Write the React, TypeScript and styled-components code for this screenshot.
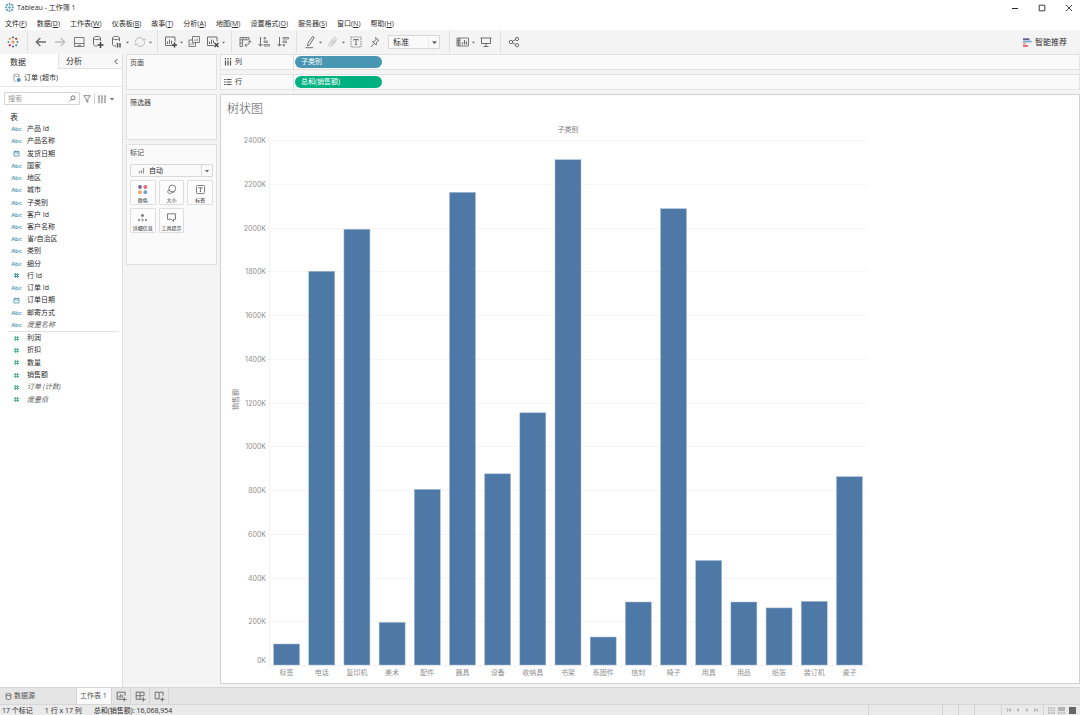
import React from "react";
import styled, { createGlobalStyle, css } from "styled-components";

const GlobalStyle = createGlobalStyle`
  * { box-sizing: border-box; }
  body {
    margin: 0;
    background: #f4f4f4;
    color: #2b2b2b;
    font-family: "Open Sans", "Noto Sans CJK SC", sans-serif;
    font-size: 7px;
    line-height: 12px;
  }
  button, input, select { font: inherit; color: inherit; }
  ul, h1, h2, p { margin: 0; padding: 0; }
  ul { list-style: none; }
`;

const buttonReset = css`
  border: 0;
  padding: 0;
  background: none;
  white-space: nowrap;
`;

const Page = styled.div`
  display: flex;
  flex-direction: column;
  min-height: 100vh;
`;

/* ---------- title bar and menus ---------- */

const TitleBar = styled.header`
  display: flex;
  align-items: center;
  gap: 3px;
  height: 15px;
  padding: 0 4px 0 5px;
  background: #fff;
`;

const WindowTitle = styled.h1`
  flex: 1;
  font-size: 7px;
  font-weight: 400;
  line-height: 12px;
`;

const WindowButtons = styled.div`
  display: flex;
  gap: 13px;
`;

const WindowButton = styled.button`
  ${buttonReset}
  width: 14px;
  height: 14px;
  display: grid;
  place-items: center;
`;

const MenuBar = styled.nav`
  display: flex;
  align-items: center;
  gap: 10px;
  height: 15px;
  padding: 2px 5px 0;
  background: #fff;
`;

const MenuButton = styled.button`
  ${buttonReset}
  line-height: 12px;
`;

/* ---------- toolbar ---------- */

const Toolbar = styled.div`
  display: flex;
  align-items: center;
  height: 24px;
  background: #f4f4f4;
`;

const ToolGroup = styled.div<{ $end: number; $last?: boolean }>`
  display: flex;
  align-items: center;
  height: 22px;
  padding: 0 ${(p) => p.$end}px 0 3px;
  border-right: ${(p) => (p.$last ? 0 : 1)}px solid #e0e0e0;
`;

const ToolButton = styled.button<{ $muted?: boolean }>`
  ${buttonReset}
  width: 19px;
  height: 18px;
  display: grid;
  place-items: center;
  color: ${(p) => (p.$muted ? "#bdbdbd" : "#6e6e6e")};
`;

const CaretButton = styled.button`
  ${buttonReset}
  width: 4px;
  height: 18px;
  margin: 0 1px 0 -1px;
  display: grid;
  place-items: center;
`;

const ShowMe = styled.button`
  ${buttonReset}
  display: flex;
  align-items: center;
  gap: 3px;
  margin-left: auto;
  padding-right: 13px;
  font-size: 8px;
`;

const SelectBox = styled.label<{ $width: number; $height: number }>`
  display: flex;
  align-items: stretch;
  width: ${(p) => p.$width}px;
  height: ${(p) => p.$height}px;
  border: 1px solid #d8d8d8;
  border-radius: 1px;
  background: #fafafa;
`;

const FitSelectBox = styled(SelectBox)`
  margin-left: 4px;
`;

const Select = styled.select<{ $size: number }>`
  flex: 1;
  min-width: 0;
  border: 0;
  padding: 0 0 0 4px;
  appearance: none;
  background: none;
  font-size: ${(p) => p.$size}px;
  outline: 0;
`;

const SelectArrow = styled.span<{ $divided?: boolean }>`
  width: 11px;
  display: grid;
  place-items: center;
  border-left: 1px solid ${(p) => (p.$divided ? "#dcdcdc" : "#eeeeee")};
`;

const SelectIcon = styled.span`
  display: grid;
  place-items: center;
  padding-left: 7px;
  color: #999;
`;

/* ---------- workspace ---------- */

const Workspace = styled.main`
  flex: 1;
  display: grid;
  grid-template-columns: 123px 91px minmax(0, 1fr);
  column-gap: 3px;
`;

const DataPane = styled.aside`
  background: #fff;
  border-right: 1px solid #dedede;
`;

const PaneTabs = styled.div`
  display: flex;
  height: 15px;
`;

const PaneTab = styled.button<{ $active?: boolean }>`
  ${buttonReset}
  flex: ${(p) => (p.$active ? "0 0 58px" : "1")};
  padding-left: ${(p) => (p.$active ? 10 : 7)}px;
  text-align: left;
  font-size: 8px;
  background: ${(p) => (p.$active ? "#fff" : "#f8f8f8")};
  border: solid #e2e2e2;
  border-width: ${(p) => (p.$active ? "0" : "0 0 1px 1px")};
`;

const CollapseButton = styled.button`
  ${buttonReset}
  width: 12px;
  display: grid;
  place-items: center;
  background: #f8f8f8;
  border-bottom: 1px solid #e2e2e2;
`;

const DataSource = styled.button`
  ${buttonReset}
  display: flex;
  align-items: center;
  gap: 3px;
  width: 100%;
  height: 18px;
  padding-left: 12px;
  border-bottom: 1px solid #e6e6e6;
  svg { color: #8a8a8a; }
`;

const SearchRow = styled.div`
  display: flex;
  align-items: center;
  gap: 3px;
  height: 23px;
  padding: 0 6px 0 4px;
  color: #6e6e6e;
`;

const SearchBox = styled.label`
  display: flex;
  align-items: center;
  width: 76px;
  height: 13px;
  padding-right: 3px;
  border: 1px solid #d4d4d4;
  border-radius: 1px;
`;

const SearchInput = styled.input`
  flex: 1;
  min-width: 0;
  border: 0;
  padding: 0 0 0 3px;
  height: 11px;
  outline: 0;
  background: none;
  &::placeholder { color: #9a9a9a; }
`;

const SmallButton = styled.button<{ $divided?: boolean }>`
  ${buttonReset}
  display: flex;
  align-items: center;
  gap: 4px;
  height: 11px;
  padding-left: ${(p) => (p.$divided ? 3 : 0)}px;
  border-left: ${(p) => (p.$divided ? 1 : 0)}px solid #d4d4d4;
`;

const TableHeading = styled.h2`
  padding-left: 10px;
  font-size: 8px;
  line-height: 13px;
  font-weight: 400;
`;

const FieldList = styled.ul<{ $height: number; $divided?: boolean }>`
  display: grid;
  grid-auto-rows: 1fr;
  height: ${(p) => p.$height}px;
  margin-left: 8px;
  margin-right: 3px;
  border-bottom: ${(p) => (p.$divided ? 1 : 0)}px solid #e4e4e4;
`;

const FieldItem = styled.button<{ $italic?: boolean }>`
  ${buttonReset}
  display: grid;
  grid-template-columns: 17px 1fr;
  column-gap: 2px;
  align-items: center;
  width: 100%;
  height: 100%;
  text-align: left;
  font-style: ${(p) => (p.$italic ? "italic" : "normal")};
  color: ${(p) => (p.$italic ? "#5e5e5e" : "#2b2b2b")};
`;

const FieldType = styled.span<{ $measure?: boolean }>`
  display: grid;
  place-items: center;
  font-size: 6px;
  font-style: normal;
  font-weight: 600;
  color: ${(p) => (p.$measure ? "#4fb392" : "#4a93ad")};
`;

const Cards = styled.div`
  display: flex;
  flex-direction: column;
  gap: 4px;
`;

const Card = styled.section<{ $height: number }>`
  min-height: ${(p) => p.$height}px;
  padding: 2px 3px;
  border: 1px solid #e0e0e0;
  background: #fafafa;
`;

const CardTitle = styled.h2`
  font-size: 7px;
  font-weight: 400;
  line-height: 12px;
  color: #444;
`;

const MarksStack = styled.div`
  display: flex;
  flex-direction: column;
  gap: 3px;
  padding-top: 5px;
`;

const MarksGrid = styled.div`
  display: grid;
  grid-template-columns: repeat(3, 1fr);
  gap: 3px;
`;

const MarkButton = styled.button`
  ${buttonReset}
  display: flex;
  flex-direction: column;
  align-items: center;
  justify-content: space-between;
  height: 25px;
  padding: 3px 0 0;
  border: 1px solid #dedede;
  border-radius: 1px;
  background: #fcfcfc;
  font-size: 5px;
  line-height: 8px;
  color: #222;
  svg { color: #707070; }
`;

const View = styled.div`
  display: flex;
  flex-direction: column;
  gap: 4px;
  padding-bottom: 3px;
`;

const Shelf = styled.section`
  display: flex;
  height: 16px;
  border: 1px solid #e2e2e2;
  background: #fafafa;
`;

const ShelfLabel = styled.h2`
  display: flex;
  align-items: center;
  gap: 3px;
  width: 73px;
  padding-left: 3px;
  border-right: 1px solid #dedede;
  font-size: 7px;
  font-weight: 400;
  color: #333;
  svg { color: #555; }
`;

const Pill = styled.button<{ $color: string }>`
  ${buttonReset}
  align-self: center;
  width: 87px;
  height: 12px;
  margin-left: 1px;
  padding-left: 6px;
  border-radius: 6px;
  text-align: left;
  line-height: 12px;
  color: #fff;
  background: ${(p) => p.$color};
`;

const Sheet = styled.section`
  flex: 1;
  border: 1px solid #d2d2d2;
  background: #fff;
`;

const SheetTitle = styled.h2`
  height: 25px;
  padding: 4px 0 0 6px;
  font-size: 12px;
  font-weight: 300;
  line-height: 20px;
  color: #555;
`;

const ChartSvg = styled.svg`
  display: block;
  font-family: Inter, "Noto Sans CJK SC", sans-serif;
  font-size: 7px;
  fill: #8f8f8f;
`;

/* ---------- bottom bars ---------- */

const SheetTabs = styled.nav`
  display: flex;
  height: 18px;
  border-top: 1px solid #d6d6d6;
  border-bottom: 1px solid #d6d6d6;
  background: #e5e5e5;
`;

const SheetTab = styled.button<{ $width: number; $active?: boolean }>`
  ${buttonReset}
  display: flex;
  align-items: center;
  gap: 2px;
  width: ${(p) => p.$width}px;
  padding-left: ${(p) => (p.$active ? 3 : 5)}px;
  border-right: 1px solid #d2d2d2;
  color: #555;
  background: ${(p) => (p.$active ? "#fafafa" : "transparent")};
`;

const NewSheetButton = styled.button`
  ${buttonReset}
  width: 19px;
  display: grid;
  place-items: center;
  border-right: 1px solid #d2d2d2;
  color: #666;
`;

const StatusBar = styled.footer`
  display: flex;
  height: 10px;
  line-height: 12px;
  background: #eaeaea;
`;

const StatusTexts = styled.div`
  flex: 1;
  display: flex;
  gap: 12px;
  padding-left: 2px;
  white-space: nowrap;
`;

const StatusCell = styled.div<{ $width: number }>`
  display: flex;
  align-items: center;
  justify-content: space-around;
  width: ${(p) => p.$width}px;
  padding: 0 2px;
  border-left: 1px solid #d4d4d4;
`;

const StatusButton = styled.button`
  ${buttonReset}
  display: grid;
  place-items: center;
  height: 10px;
  color: #b4b4b4;
`;

/* ---------- icons ---------- */

type IconProps = { size?: number; children: React.ReactNode; box?: number; w?: number };

const Icon = ({ size = 14, box = 14, w = 1, children }: IconProps) => (
  <svg width={size} height={size} viewBox={`0 0 ${box} ${box}`} fill="none" stroke="currentColor" strokeWidth={w} aria-hidden="true">
    {children}
  </svg>
);

const Caret = ({ size = 4 }: { size?: number }) => (
  <svg width={size} height={size} viewBox="0 0 4 4" aria-hidden="true">
    <path d="M0 1h4L2 3.4z" fill="#666" />
  </svg>
);

const plus = (x: number, y: number, c: string, r: number) => (
  <path d={`M${x - r} ${y}h${2 * r}M${x} ${y - r}v${2 * r}`} stroke={c} />
);

const TableauMark = ({ colorful }: { colorful?: boolean }) => {
  const c: string[] = colorful
    ? ["#e8762d", "#5b6591", "#c72035", "#eb9129", "#59879b", "#5b879b", "#c1a0a8", "#7199a6", "#5b6591"]
    : Array(9).fill("#4f93b3");
  return (
    <Icon size={colorful ? 12 : 9} box={12} w={colorful ? 1 : 1.3}>
      {!colorful && <path d="M0 0h12v12H0z" fill="#e6f0f4" stroke="none" />}
      {plus(6, 6, c[0], 1.6)}
      {plus(6, 1.5, c[1], 1.1)}
      {plus(6, 10.5, c[8], 1.1)}
      {plus(1.5, 6, c[7], 1.1)}
      {plus(10.5, 6, c[4], 1.1)}
      {plus(2.8, 2.8, c[3], 1.1)}
      {plus(9.2, 2.8, c[2], 1.1)}
      {plus(2.8, 9.2, c[2], 1.1)}
      {plus(9.2, 9.2, c[5], 1.1)}
    </Icon>
  );
};

const cylinder = (
  <path d="M2.5 3v6.5c0 1 1.5 1.6 3.5 1.6M9.5 3v3M2.5 3c0-1 1.5-1.6 3.5-1.6s3.5.6 3.5 1.6-1.5 1.6-3.5 1.6S2.5 4 2.5 3z" />
);

const icons = {
  back: <Icon w={1.4}><path d="M12 7H2.5M6.3 3L2.3 7l4 4" /></Icon>,
  forward: <Icon w={1.3}><path d="M2 7h9.5M7.7 3l4 4-4 4" /></Icon>,
  save: <Icon w={0.9}><path d="M2.5 2.5h9.5v9H2.5zM2.5 8.5h9.5M6 11.5V10.3h3" /></Icon>,
  addSource: <Icon>{cylinder}<path d="M9.5 7v6M6.5 10h6" strokeWidth={1.5} stroke="#444" /></Icon>,
  pause: <Icon>{cylinder}<path d="M7.5 8v4.500M10 8v4.500" strokeWidth={1.5} stroke="#555" /></Icon>,
  refresh: <Icon><path d="M2.3 7.5a4.5 4.5 0 0 1 8.2-3M11.7 6.5a4.5 4.5 0 0 1-8.2 3M9 5h3V3.5M5 9H2v1.5" /></Icon>,
  newSheet: <Icon><path d="M9 10.5H1.5v-8.5h9.5v4.5M3.5 9V6.5M5.5 9V4.5M7.5 9V5.5" /><path d="M10.5 7.5v5M8 10h5" strokeWidth={1.5} stroke="#444" /></Icon>,
  duplicate: <Icon w={0.9}><path d="M5.5 1.5h7v6h-7zM5.5 5H2v6.5h6.5V7.5M8 6V4.5M10 6V3.5M4 10V8.5M6 10V8" /></Icon>,
  clear: <Icon><path d="M8 10.5H1.5v-8.5h9.5v4.5M3.5 9V6.5M5.5 9V4.5M7.5 8V5.5" /><path d="M8.5 8l4 4M12.5 8l-4 4" strokeWidth={1.5} stroke="#444" /></Icon>,
  swap: <Icon w={0.9}><path d="M2 2.5h9v2.3H2zM2 4.8v6.7h2.5V4.8M5 2.5v2.3M8 2.5v2.3M2 8h2.5M11.7 6c0 3-1.5 4.3-4.7 4.3M10.2 7.3l1.5-1.7 1.5 1.7M8.5 8.7L7 10.3l1.5 1.6" /></Icon>,
  sortAsc: <Icon><path d="M3.5 2v9M1.5 9l2 2.2L5.5 9" /><path d="M7 2.5h1.5v1.5H7zM7 6h3.5v1.5H7zM7 9.5h5.5v1.5H7z" strokeWidth={0.8} /></Icon>,
  sortDesc: <Icon><path d="M3.5 2v9M1.5 9l2 2.2L5.5 9" /><path d="M7 2.5h5.5v1.5H7zM7 6h3.5v1.5H7zM7 9.5h1.5v1.5H7z" strokeWidth={0.8} /></Icon>,
  highlight: <Icon><path d="M9.5 1.5l1.7.9-4.4 7.3-2.3 1.2.3-2.5zM2.5 12.7h7.5" /></Icon>,
  clip: <Icon w={0.9}><path d="M10.8 4.5L6.3 10.8c-1.8 2-4.3.3-3.1-1.8L7.3 3c1.3-1.7 3.5-.2 2.5 1.3L6.3 9.3c-.7.9-1.6.1-1.1-.7L8 4.7" /></Icon>,
  text: <Icon><path d="M2 2h10v10H2z" strokeDasharray="1.5 .8" strokeWidth={0.8} /><path d="M4.7 5.5v-1h4.6v1M7 4.5v5M6 9.5h2" /></Icon>,
  pin: <Icon w={0.9}><path d="M7.5 2.5l3.5 3-1.3.3-1.5 2.2.2 2L4.3 6.7l2-.2 1.7-2zM6 8.5L3 12" /></Icon>,
  cards: <Icon w={0.9}><path d="M1 3h11.5v8H1zM1 5.5h3M1 8h3M2.5 3v8M4 3v8" /><path d="M6.5 9.5V7.5M8.5 9.5V5M10.5 9.5V6.5" strokeWidth={1.2} /></Icon>,
  present: <Icon><path d="M1.5 3h11M2.5 3v5.5h9V3M7 8.5v3M4.5 11.5h5" /></Icon>,
  share: <Icon><circle cx="4" cy="7" r="1.7" /><circle cx="10" cy="4" r="1.6" /><circle cx="10" cy="10.2" r="1.6" /><path d="M5.5 6.2l3-1.5M5.5 7.8l3 1.6" /></Icon>,
};

const HashIcon = () => (
  <Icon size={7} box={7} w={0.9}><path d="M2.5 1v5M4.5 1v5M.8 2.5h5.4M.8 4.5h5.4" /></Icon>
);
const CalendarIcon = () => (
  <Icon size={7} box={7} w={0.8}><path d="M1 1.5h5v4.5H1zM1 3h5M2.3.7v1M4.7.7v1" /></Icon>
);

/* ---------- data ---------- */

const MENUS: [string, string][] = [
  ["文件", "F"], ["数据", "D"], ["工作表", "W"], ["仪表板", "B"], ["故事", "T"], ["分析", "A"],
  ["地图", "M"], ["设置格式", "O"], ["服务器", "S"], ["窗口", "N"], ["帮助", "H"],
];

type Kind = "text" | "date" | "number";
type Field = { name: string; kind: Kind; generated?: boolean };

const DIMENSIONS: Field[] = [
  { name: "产品 Id", kind: "text" },
  { name: "产品名称", kind: "text" },
  { name: "发货日期", kind: "date" },
  { name: "国家", kind: "text" },
  { name: "地区", kind: "text" },
  { name: "城市", kind: "text" },
  { name: "子类别", kind: "text" },
  { name: "客户 Id", kind: "text" },
  { name: "客户名称", kind: "text" },
  { name: "省/自治区", kind: "text" },
  { name: "类别", kind: "text" },
  { name: "细分", kind: "text" },
  { name: "行 Id", kind: "number" },
  { name: "订单 Id", kind: "text" },
  { name: "订单日期", kind: "date" },
  { name: "邮寄方式", kind: "text" },
  { name: "度量名称", kind: "text", generated: true },
];

const MEASURES: Field[] = [
  { name: "利润", kind: "number" },
  { name: "折扣", kind: "number" },
  { name: "数量", kind: "number" },
  { name: "销售额", kind: "number" },
  { name: "订单 (计数)", kind: "number", generated: true },
  { name: "度量值", kind: "number", generated: true },
];

/* Sales per sub-category, in thousands. */
const SALES: [string, number][] = [
  ["标签", 96], ["电话", 1800], ["复印机", 1992], ["美术", 195], ["配件", 803], ["器具", 2161],
  ["设备", 874], ["收纳具", 1153], ["书架", 2310], ["系固件", 128], ["信封", 288], ["椅子", 2086],
  ["用具", 478], ["用品", 288], ["纸张", 261], ["装订机", 291], ["桌子", 861],
];

/* ---------- parts ---------- */

const Fields = ({ items, height, measure }: { items: Field[]; height: number; measure?: boolean }) => (
  <FieldList $height={height} $divided={!measure}>
    {items.map((f) => (
      <li key={f.name}>
        <FieldItem $italic={f.generated}>
          <FieldType $measure={measure}>
            {f.kind === "text" ? "Abc" : f.kind === "date" ? <CalendarIcon /> : <HashIcon />}
          </FieldType>
          <span>{f.name}</span>
        </FieldItem>
      </li>
    ))}
  </FieldList>
);

const Tool = ({ name, label, muted }: { name: keyof typeof icons; label: string; muted?: boolean }) => (
  <ToolButton aria-label={label} $muted={muted}>{icons[name]}</ToolButton>
);

const MoreButton = ({ label }: { label: string }) => (
  <CaretButton aria-label={label}><Caret size={3} /></CaretButton>
);

const PLOT = { left: 48, top: 20, width: 598, height: 525, max: 2400, step: 200, bar: 26 };

const BarChart = () => {
  const base = PLOT.top + PLOT.height;
  const pitch = PLOT.width / SALES.length;
  const y = (v: number) => base - (v / PLOT.max) * PLOT.height;
  const ticks = Array.from({ length: PLOT.max / PLOT.step + 1 }, (_, i) => i * PLOT.step);
  return (
    <ChartSvg width="650" height="562" viewBox="0 0 650 562" role="img" aria-label="各子类别的销售额">
      <text x={PLOT.left + PLOT.width / 2} y="12" textAnchor="middle" fill="#7c7c7c">子类别</text>
      <text transform={`translate(17 ${PLOT.top + PLOT.height / 2 - 3}) rotate(-90)`} textAnchor="middle" fill="#7c7c7c">销售额</text>
      {ticks.map((t) => (
        <g key={t}>
          <rect x={PLOT.left - 2} y={Math.round(y(t))} width={PLOT.width + 2} height="1" fill="#f5f5f5" />
          <text x="45" y={t === 0 ? base - 2 : y(t) + 3} textAnchor="end">{t}K</text>
        </g>
      ))}
      <rect x={PLOT.left} y={PLOT.top - 4} width="1" height={PLOT.height + 6} fill="#f3f3f3" />
      {SALES.map(([name, v], i) => {
        const center = PLOT.left + pitch * (i + 0.5);
        return (
          <g key={name}>
            <rect x={center - PLOT.bar / 2} y={y(v)} width={PLOT.bar} height={base - y(v)} fill="#4e79a7" stroke="#a9bfd6" strokeWidth="0.5" />
            <rect x={center + pitch / 2} y={base} width="1" height="2" fill="#ececec" />
            <text x={center} y={base + 10} textAnchor="middle">{name}</text>
          </g>
        );
      })}
    </ChartSvg>
  );
};

const MARKS: [string, React.ReactNode][] = [
  ["颜色", (
    <Icon size={11} box={11} key="c">
      <g stroke="none">
        <circle cx="3" cy="3" r="1.9" fill="#7a6690" />
        <circle cx="8.3" cy="3" r="1.9" fill="#ee6677" />
        <circle cx="3" cy="8.2" r="1.9" fill="#f3a36c" />
        <circle cx="8.3" cy="8.2" r="1.9" fill="#6fa3cc" />
      </g>
    </Icon>
  )],
  ["大小", <Icon size={11} box={11} w={0.9} key="s"><circle cx="6.3" cy="4.5" r="3.4" /><path d="M3.2 5.7a2 2 0 1 0 2.5 2.5M5.7 8.2h2.6" /></Icon>],
  ["标签", <Icon size={11} box={11} w={0.9} key="l"><rect x="1.5" y="1.5" width="8" height="8" rx="1" /><path d="M3.7 4.3v-.6h3.6v.6M5.5 3.7v3.8M4.8 7.5h1.4" /></Icon>],
  ["详细信息", (
    <Icon size={11} box={11} w={0.8} key="d">
      <circle cx="5.5" cy="3.5" r="1.1" fill="currentColor" />
      <circle cx="2" cy="8" r=".8" /><circle cx="5.5" cy="8" r=".8" /><circle cx="9" cy="8" r=".8" />
    </Icon>
  )],
  ["工具提示", <Icon size={11} box={11} w={0.9} key="t"><path d="M1.5 1.8h8v5.5H7.5v2.2L5.3 7.3H1.5z" /></Icon>],
];

export default function App() {
  return (
    <Page>
      <GlobalStyle />
      <TitleBar>
        <TableauMark />
        <WindowTitle>Tableau - 工作簿 1</WindowTitle>
        <WindowButtons>
          <WindowButton aria-label="最小化"><Icon size={8} box={8}><path d="M1 4.5h6" /></Icon></WindowButton>
          <WindowButton aria-label="最大化"><Icon size={8} box={8} w={0.9}><path d="M1.2 1.2h5.6v5.6H1.2z" /></Icon></WindowButton>
          <WindowButton aria-label="关闭"><Icon size={8} box={8} w={0.9}><path d="M1 1l6 6M7 1L1 7" /></Icon></WindowButton>
        </WindowButtons>
      </TitleBar>
      <MenuBar>
        {MENUS.map(([name, key]) => (
          <MenuButton key={name}>{name}(<u>{key}</u>)</MenuButton>
        ))}
      </MenuBar>

      <Toolbar>
        <ToolGroup $end={5}>
          <ToolButton aria-label="开始页面"><TableauMark colorful /></ToolButton>
        </ToolGroup>
        <ToolGroup $end={4}>
          <Tool name="back" label="撤消" />
          <Tool name="forward" label="重做" muted />
          <Tool name="save" label="保存" />
          <Tool name="addSource" label="新建数据源" />
          <Tool name="pause" label="暂停自动更新" />
          <MoreButton label="自动更新选项" />
          <Tool name="refresh" label="运行更新" muted />
          <MoreButton label="更新选项" />
        </ToolGroup>
        <ToolGroup $end={5}>
          <Tool name="newSheet" label="新建工作表" />
          <MoreButton label="新建选项" />
          <Tool name="duplicate" label="复制" />
          <Tool name="clear" label="清除工作表" />
          <MoreButton label="清除选项" />
        </ToolGroup>
        <ToolGroup $end={4}>
          <Tool name="swap" label="交换行和列" />
          <Tool name="sortAsc" label="升序排序" />
          <Tool name="sortDesc" label="降序排序" />
        </ToolGroup>
        <ToolGroup $end={9}>
          <Tool name="highlight" label="突出显示" />
          <MoreButton label="突出显示选项" />
          <Tool name="clip" label="组成员" muted />
          <MoreButton label="组选项" />
          <Tool name="text" label="显示标记标签" />
          <Tool name="pin" label="固定轴" />
          <FitSelectBox $width={52} $height={14}>
            <Select $size={8} aria-label="适合" defaultValue="标准"><option>标准</option></Select>
            <SelectArrow><Caret size={5} /></SelectArrow>
          </FitSelectBox>
        </ToolGroup>
        <ToolGroup $end={5}>
          <Tool name="cards" label="显示/隐藏卡" />
          <MoreButton label="卡选项" />
          <Tool name="present" label="演示模式" />
        </ToolGroup>
        <ToolGroup $end={3} $last>
          <Tool name="share" label="共享" />
        </ToolGroup>
        <ShowMe>
          <Icon size={9} box={9} w={1.8}>
            <path d="M0 1.2h6.5" stroke="#6b5b8c" />
            <path d="M0 3.5h8.5" stroke="#7aa6cf" />
            <path d="M0 5.7h3" stroke="#f0a47a" />
            <path d="M0 8h5" stroke="#ee5f6f" />
          </Icon>
          智能推荐
        </ShowMe>
      </Toolbar>

      <Workspace>
        <DataPane>
          <PaneTabs>
            <PaneTab $active>数据</PaneTab>
            <PaneTab>分析</PaneTab>
            <CollapseButton aria-label="折叠"><Icon size={7} box={7} w={0.9}><path d="M4.5 1L2 3.5 4.5 6" /></Icon></CollapseButton>
          </PaneTabs>
          <DataSource>
            <Icon size={9} box={12}>
              {cylinder}
              <circle cx="9" cy="9.2" r="2.6" fill="#4a93ad" stroke="none" />
            </Icon>
            订单 (超市)
          </DataSource>
          <SearchRow>
            <SearchBox>
              <SearchInput placeholder="搜索" aria-label="搜索" />
              <Icon size={7} box={7} w={0.9}><circle cx="4" cy="2.8" r="2" /><path d="M2.5 4.3L.5 6.3" /></Icon>
            </SearchBox>
            <SmallButton aria-label="筛选">
              <Icon size={8} box={8} w={0.8}><path d="M.7.7h6.6L4.8 4v3.3L3.2 6.3V4z" /></Icon>
            </SmallButton>
            <SmallButton $divided aria-label="查看方式">
              <Icon size={8} box={8} w={1.3}>
                <path d="M0 1.2h8M0 3.2h8M0 5.2h8M0 7.2h8" stroke="#8c8c8c" strokeDasharray="2 1" />
              </Icon>
              <Caret />
            </SmallButton>
          </SearchRow>
          <TableHeading>表</TableHeading>
          <Fields items={DIMENSIONS} height={209} />
          <Fields items={MEASURES} height={74} measure />
        </DataPane>

        <Cards>
          <Card $height={36}><CardTitle>页面</CardTitle></Card>
          <Card $height={46}><CardTitle>筛选器</CardTitle></Card>
          <Card $height={121}>
            <CardTitle>标记</CardTitle>
            <MarksStack>
              <SelectBox $width={83} $height={13}>
                <SelectIcon><Icon size={7} box={7} w={1.2}><path d="M1.5 6.5V4M3.5 6.5V3M5.5 6.5V1" /></Icon></SelectIcon>
                <Select $size={7} aria-label="标记类型" defaultValue="自动"><option>自动</option></Select>
                <SelectArrow $divided><Caret /></SelectArrow>
              </SelectBox>
              <MarksGrid>
                {MARKS.map(([name, icon]) => (
                  <MarkButton key={name}>{icon}{name}</MarkButton>
                ))}
              </MarksGrid>
            </MarksStack>
          </Card>
        </Cards>

        <View>
          <Shelf>
            <ShelfLabel>
              <Icon size={8} box={8} w={1.2}><path d="M1.5 0v1.5M4 0v1.5M6.5 0v1.5M1.5 2.5v5M4 2.5v5M6.5 2.5v5" /></Icon>
              列
            </ShelfLabel>
            <Pill $color="#4996b2">子类别</Pill>
          </Shelf>
          <Shelf>
            <ShelfLabel>
              <Icon size={8} box={8} w={1.2}><path d="M0 1.5h1.5M0 4h1.5M0 6.5h1.5M2.5 1.5h5M2.5 4h5M2.5 6.5h5" /></Icon>
              行
            </ShelfLabel>
            <Pill $color="#00b180">总和(销售额)</Pill>
          </Shelf>
          <Sheet>
            <SheetTitle>树状图</SheetTitle>
            <BarChart />
          </Sheet>
        </View>
      </Workspace>

      <SheetTabs>
        <SheetTab $width={77}>
          <Icon size={7} box={7} w={0.8}><path d="M1.2 1.5v4c0 .7 1 1.1 2.3 1.1s2.3-.4 2.3-1.1v-4M1.2 1.5c0-.7 1-1.1 2.3-1.1s2.3.4 2.3 1.1-1 1.1-2.3 1.1-2.3-.4-2.3-1.1z" /></Icon>
          数据源
        </SheetTab>
        <SheetTab $width={35} $active>工作表 1</SheetTab>
        <NewSheetButton aria-label="新建工作表"><Icon size={11} box={14} w={1.2}><path d="M8 10.5H1.5v-9h10V6M4 8.5V6M6 8.5V4M8 8.5V5M10.5 8v5.5M8 10.7h5.5" /></Icon></NewSheetButton>
        <NewSheetButton aria-label="新建仪表板"><Icon size={11} box={14} w={1.2}><path d="M8 10.5H1.5v-9h10V6M6.5 1.5v9M1.5 6h10M10.5 8v5.5M8 10.7h5.5" /></Icon></NewSheetButton>
        <NewSheetButton aria-label="新建故事"><Icon size={11} box={14} w={1.2}><path d="M7 10.5L6.5 10H1.5V1.5h4l1 1 1-1h4V6M6.5 2.5V10M10.5 8v5.5M8 10.7h5.5" /></Icon></NewSheetButton>
      </SheetTabs>
      <StatusBar>
        <StatusTexts>
          <p>17 个标记</p>
          <p>1 行 x 17 列</p>
          <p>总和(销售额): 16,068,954</p>
        </StatusTexts>
        <StatusCell $width={74} />
        <StatusCell $width={16} />
        <StatusCell $width={16} />
        <StatusCell $width={27} />
        <StatusCell $width={42}>
          <StatusButton aria-label="第一个"><Icon size={4} box={4} w={0.8}><path d="M.5 0v4" /><path d="M4 0v4L1 2z" fill="currentColor" stroke="none" /></Icon></StatusButton>
          <StatusButton aria-label="上一个"><Icon size={4} box={4}><path d="M3 0v4L.5 2z" fill="currentColor" stroke="none" /></Icon></StatusButton>
          <StatusButton aria-label="下一个"><Icon size={4} box={4}><path d="M1 0v4L3.5 2z" fill="currentColor" stroke="none" /></Icon></StatusButton>
          <StatusButton aria-label="最后一个"><Icon size={4} box={4} w={0.8}><path d="M3.5 0v4" /><path d="M0 0v4L3 2z" fill="currentColor" stroke="none" /></Icon></StatusButton>
        </StatusCell>
        <StatusCell $width={37}>
          <StatusButton aria-label="工作表排序程序"><Icon size={7} box={7} w={1.6}><path d="M0 1h7M0 3.5h7M0 6h7" strokeDasharray="1.8 .8" /></Icon></StatusButton>
          <StatusButton aria-label="胶片视图"><Icon size={7} box={7}><path d="M0 0h7v4.2H0z" fill="currentColor" stroke="none" /><path d="M0 6h7" strokeWidth={1.6} strokeDasharray="1.8 .8" /></Icon></StatusButton>
          <StatusButton aria-label="标签视图"><Icon size={7} box={7}><path d="M0 0h7v7H0z" fill="#666" stroke="none" /></Icon></StatusButton>
        </StatusCell>
      </StatusBar>
    </Page>
  );
}
